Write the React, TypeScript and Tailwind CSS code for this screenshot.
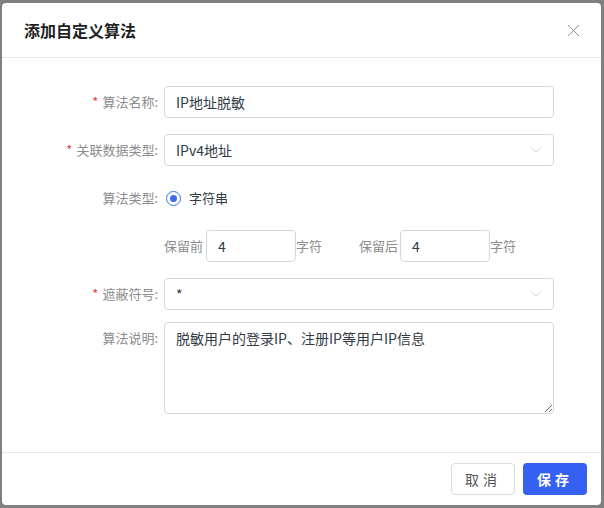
import { ChevronDown, X } from 'lucide-react'

const font = { fontFamily: '"Noto Sans CJK SC", "Noto Sans", sans-serif' }

function Label({ text, required }: { text: string; required?: boolean }) {
  return (
    <div className="w-[162px] shrink-0 pr-[6px] text-right text-[13px] text-[#8c8c8c]">
      {required && <span className="mr-[4px] text-[#f04343]">*</span>}
      {text}
    </div>
  )
}

function Field({ value, select }: { value: string; select?: boolean }) {
  return (
    <div className="flex h-[32px] flex-1 items-center justify-between rounded-[4px] border border-[#d3d6de] bg-white pl-[11px] pr-[8px] text-[14px] text-[#333a45]">
      <span>{value}</span>
      {select && <ChevronDown size={18} strokeWidth={1} className="text-[#b4b8c0]" />}
    </div>
  )
}

export default function App() {
  return (
    <div className="h-[508px] w-[604px] bg-[#808080] pl-[2px] pt-[3px]" style={font}>
      <div className="flex h-[502px] w-[599px] flex-col rounded-[4px] bg-white">
        <div className="flex h-[55px] items-center justify-between border-b border-[#e8e8e8] pl-[22px] pr-[17px]">
          <span className="text-[16px] font-bold text-[#1f1f1f]">添加自定义算法</span>
          <X size={21} strokeWidth={1.1} className="text-[#8c8c8c]" />
        </div>

        <div className="flex flex-1 flex-col pr-[47px] pt-[28px]">
          <div className="flex items-center">
            <Label text="算法名称:" required />
            <Field value="IP地址脱敏" />
          </div>
          <div className="mt-[16px] flex items-center">
            <Label text="关联数据类型:" required />
            <Field value="IPv4地址" select />
          </div>
          <div className="mt-[16px] flex h-[32px] items-center">
            <Label text="算法类型:" />
            <div className="flex items-center gap-[8px] pl-[2px] text-[13px] text-[#333a45]">
              <span className="flex h-[15px] w-[15px] items-center justify-center rounded-full border-[1.5px] border-[#3b6cf2]">
                <span className="h-[7px] w-[7px] rounded-full bg-[#3b6cf2]" />
              </span>
              字符串
            </div>
          </div>
          <div className="mt-[16px] flex h-[32px] items-center pl-[162px] text-[13px] text-[#8c8c8c]">
            <span className="w-[42px]">保留前</span>
            <div className="flex h-[32px] w-[90px] items-center rounded-[4px] border border-[#d3d6de] pl-[11px] text-[14px] text-[#333a45]">4</div>
            <span className="w-[63px]">字符</span>
            <span className="w-[41px]">保留后</span>
            <div className="flex h-[32px] w-[90px] items-center rounded-[4px] border border-[#d3d6de] pl-[11px] text-[14px] text-[#333a45]">4</div>
            <span>字符</span>
          </div>
          <div className="mt-[16px] flex items-center">
            <Label text="遮蔽符号:" required />
            <Field value="*" select />
          </div>
          <div className="mt-[12px] flex items-start">
            <div className="pt-[6px]">
              <Label text="算法说明:" />
            </div>
            <textarea
              readOnly
              defaultValue="脱敏用户的登录IP、注册IP等用户IP信息"
              className="h-[92px] flex-1 rounded-[4px] border border-[#d3d6de] px-[11px] py-[5px] text-[14px] text-[#333a45] outline-none"
              style={font}
            />
          </div>
        </div>

        <div className="flex h-[53px] items-start justify-end gap-[8px] border-t border-[#e8e8e8] pr-[14px] pt-[10px]">
          <button className="h-[32px] w-[64px] rounded-[4px] border border-[#dcdcdc] bg-white text-[14px] tracking-[4px] text-[#555]">
            取消
          </button>
          <button className="h-[32px] w-[64px] rounded-[4px] bg-[#3461f2] text-[14px] font-bold tracking-[4px] text-white">
            保存
          </button>
        </div>
      </div>
    </div>
  )
}
